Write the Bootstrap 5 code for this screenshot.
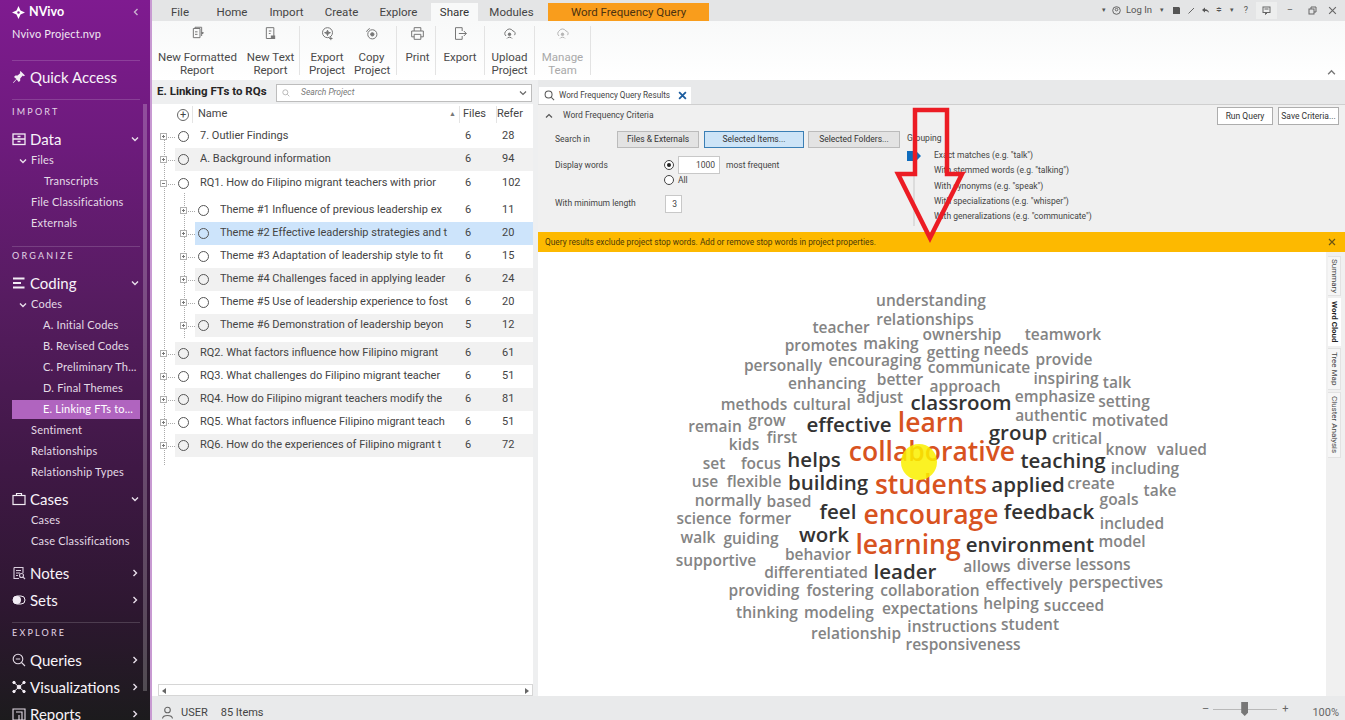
<!DOCTYPE html>
<html lang="en">
<head>
<meta charset="UTF-8">
<meta name="viewport" content="width=device-width, initial-scale=1.0">
<title>NVivo - Word Frequency Query</title>
<link href="https://cdn.jsdelivr.net/npm/bootstrap@5.3.1/dist/css/bootstrap.min.css" rel="stylesheet">
<style>
html, body { height: 720px; overflow: hidden; }
body { font-family: Roboto, "Open Sans", sans-serif; color: #3c3c3c; background: #fff; }
.app { width: 1345px; height: 720px; position: relative; }

/* sidebar */
.side { width: 150px; height: 720px; flex: none; overflow: hidden; position: relative; padding-left: 12px; padding-right: 10px; font-family: Lato, sans-serif; color: #f1e8f3;
  background: linear-gradient(180deg, #7f1b90 0%, #6d1b7c 20%, #561c60 42%, #3f1845 65%, #2d1730 85%, #1c1b1d 100%); }
.side-scroll { position: absolute; left: 143px; top: 104px; width: 4px; height: 587px; background: rgba(255,255,255,.22); }
.side-brand { height: 20px; margin-top: 2px; font-weight: 700; font-size: 12.5px; color: #fff; }
.side-brand .chev { stroke: #c9b2ce; }
.side-file { height: 20px; margin-top: 2px; margin-bottom: 16px; font-size: 11px; line-height: 20px; letter-spacing: .2px; }
.side-rule { height: 1px; background: rgba(255,255,255,.16); width: 128px; }
.side-label { height: 16px; line-height: 16px; font-size: 9px; letter-spacing: 2.2px; color: #e3d5e6; }
.side-head { height: 22px; font-size: 15px; color: #f8f3f9; }
.side-head svg.ico { width: 14px; height: 14px; margin-right: 4px; flex: none; }
.side-head .chev { margin-left: auto; margin-right: 1px; }
.side-sub { height: 21px; font-size: 11px; letter-spacing: .2px; white-space: nowrap; color: #e4dbe6; }
.lvl0 { padding-left: 7px; }
.lvl1 { padding-left: 19px; }
.lvl2 { padding-left: 31px; }
.lvl2b { padding-left: 32px; }
.side-on { background: #b064bf; color: #fff; width: 128px; height: 19px; margin-top: 1px; margin-bottom: 1px; }
.chev { width: 8px; height: 8px; fill: none; stroke: #e9dfeb; stroke-width: 1.4; flex: none; }
.m5 { margin-top: 5px; }
.m10 { margin-top: 10px; }
.m11 { margin-top: 11px; }
.m12 { margin-top: 12px; }
.m1px { margin-top: 1px; }
.m2px { margin-top: 2px; }

/* main */
.main { width: 1195px; height: 720px; border-left: 2px solid #c89ad2; background: #eaebec; }
.tabs { height: 21px; background: #e4e5e6; font-size: 11.5px; color: #444; position: relative; }
.rtab { height: 18px; line-height: 18px; margin-top: 3px; text-align: center; }
.rtab-on { background: #f8f9f9; color: #333; }
.rtab-query { background: #f99d1c; color: #4b3210; width: 161px; margin-left: 8px; }
.rt-file { width: 56px; }
.rt-home { width: 50px; margin-left: -1px; }
.rt-import { width: 59px; }
.rt-create { width: 51px; }
.rt-explore { width: 63px; }
.rt-share { width: 47px; margin-left: 1px; }
.rt-modules { width: 57px; margin-left: 5px; }
.win { font-size: 7px; color: #555; margin-left: auto; height: 21px; padding-right: 4px; }
.win svg { width: 9px; height: 9px; fill: none; stroke: #666; stroke-width: 1; }
.wc { height: 21px; display: flex; align-items: center; justify-content: center; flex: none; }
.wc12 { width: 12px; }
.wc14 { width: 14px; }
.wc16 { width: 16px; }
.wc18 { width: 18px; }
.wc22 { width: 22px; }
.wc-log { width: 34px; font-size: 9.5px; white-space: nowrap; }
.wc-help { font-size: 9px; }
.wc-fill svg { fill: #555; stroke: none; }
.win-chat { background: #edeeee; width: 21px; height: 17px; margin-left: 2px; margin-right: 2px; }
.ribbon { height: 59px; background: linear-gradient(180deg, #f8f9f9, #fff); position: relative; padding-top: 5px; }
.rb { height: 49px; text-align: center; font-size: 11.5px; line-height: 13px; color: #4a4a4a; border-right: 1px solid #e3e3e3; white-space: nowrap; flex: none; }
.rb-plain { border-right: 0; }
.rb svg { display: block; margin: 0 auto 10px; width: 15px; height: 15px; fill: none; stroke: #777; stroke-width: 1.2; }
.rb-off { color: #a9a9a9; }
.rb-off svg { stroke: #b5b5b5; }
.rb-a { width: 78px; margin-left: 6px; }
.rb-b { width: 58px; margin-left: 6px; }
.rb-c { width: 54px; }
.rb-d { width: 43px; padding-right: 7px; }
.rb-e { width: 39px; padding-left: 3px; }
.rb-f { width: 49px; }
.rb-g { width: 50px; }
.rb-h { width: 56px; }
.rb-collapse { position: absolute; right: 9px; bottom: 3px; width: 9px; height: 9px; fill: none; stroke: #777; stroke-width: 1.2; }

/* project list */
.work { height: 616px; }
.left { width: 381px; flex: none; height: 616px; position: relative; }
.left-top { height: 24px; background: #eeeff0; padding-left: 5px; }
.left-title { font-size: 11.5px; font-weight: 700; color: #262626; width: 119px; white-space: nowrap; }
.search-box { width: 256px; height: 18px; margin-top: 1px; border: 1px solid #bdbdbd; background: #fff; font-size: 8.5px; font-style: italic; color: #777; padding-left: 5px; }
.search-box svg { width: 8px; height: 8px; fill: none; stroke: #aaa; stroke-width: 1.2; margin-right: 11px; }
.search-box .chev { margin-left: auto; margin-right: 4px; stroke: #666; }
.left-body { background: #fff; height: 592px; position: relative; font-size: 11px; color: #444; }
.t-head { height: 21px; }
.t-row { height: 23px; white-space: nowrap; position: relative; }
.t-row.top { margin-left: 23px; padding-left: 3px; }
.t-row.sub { margin-left: 43px; padding-left: 3px; }
.t-shade { background: #f1f1f1; }
.t-pick { background: #cde4fb; }
.t-dot { width: 11px; height: 11px; border: 1.3px solid #555; border-radius: 50%; flex: none; margin-right: 11px; }
.t-name { width: 264px; overflow: hidden; }
.sub .t-name { width: 244px; }
.t-files { width: 38px; padding-left: 1px; }
.t-exp { position: absolute; left: -15px; top: 8px; width: 7px; height: 7px; border: 1px solid #b0b0b0; background: #fff; }
.t-exp::before { content: ""; position: absolute; left: 1px; right: 1px; top: 2px; height: 1px; background: #777; }
.t-plus::after { content: ""; position: absolute; top: 1px; bottom: 1px; left: 2px; width: 1px; background: #777; }
.t-exp-line { position: absolute; left: 7px; top: 3px; width: 7px; border-top: 1px dotted #aaa; }
.t-guide { position: absolute; border-left: 1px dotted #aaa; }
.guide-a { left: 12px; top: 36px; height: 325px; }
.guide-b { left: 32px; top: 89px; height: 145px; }
.t-gap { height: 4px; }
.t-gap-b { height: 5px; }
.hscroll { position: absolute; left: 6px; right: 0; bottom: 0; height: 12px; background: #fff; border: 1px solid #d6d6d6; }
.hscroll i { position: absolute; top: 3px; width: 0; height: 0; border-top: 3px solid transparent; border-bottom: 3px solid transparent; }
.hs-l { left: 3px; border-right: 4px solid #666; }
.hs-r { right: 3px; border-left: 4px solid #666; }
.th-sep { border-right: 1px solid #e4e4e4; height: 17px; width: 1px; flex: none; }
.th-add { width: 12px; height: 12px; margin-left: 25px; border: 1.2px solid #666; border-radius: 50%; font-size: 11px; line-height: 9px; text-align: center; color: #444; flex: none; }
.th-first { margin-left: 3px; }
.th-name { padding-left: 5px; }
.th-sort { font-size: 7px; color: #777; margin-right: 3px; }
.th-files { width: 36px; padding-left: 3px; }
.th-refer { width: 32px; padding-left: 0; margin-right: 4px; }

/* results */
.splitter { width: 5px; flex: none; background: #eeeff0; }
.right { width: 807px; flex: none; height: 616px; position: relative; background: #fff; }
.doc-tabs { height: 24px; background: #e8e9ea; padding-left: 1px; }
.doc-tab { width: 152px; height: 17px; background: #fff; margin-top: 7px; font-size: 8.2px; padding-left: 5px; color: #444; white-space: nowrap; }
.doc-tab svg { width: 11px; height: 11px; fill: none; stroke: #555; stroke-width: 1.1; margin-right: 4px; flex: none; }
.doc-tab .x { width: 9px; height: 9px; stroke: #1b5c9e; stroke-width: 1.6; margin-left: auto; margin-right: 4px; }
.crit { height: 128px; background: #f0f0f0; border-top: 1px solid #cfcfcf; font-size: 8.5px; color: #444; white-space: nowrap; position: relative; padding-left: 17px; }
.crit-title { height: 21px; margin-left: -10px; }
.crit-title svg { width: 8px; height: 8px; fill: none; stroke: #555; stroke-width: 1.2; margin-right: 10px; }
.crit-cols { margin-top: 5px; }
.crit-left { width: 352px; flex: none; }
.lbl-w { width: 62px; flex: none; }
.q-btn { height: 17px; border: 1px solid #bbb; background: #e3e3e3; font-size: 8.5px; line-height: 15px; text-align: center; color: #333; border-radius: 0; }
.q-btn-on { background: #cde4f7; border-color: #3b7fb5; }
.q-white { background: #fff; border-color: #adadad; height: 18px; line-height: 16px; }
.qb-files { width: 82px; }
.qb-items { width: 100px; margin-left: 5px; }
.qb-folders { width: 92px; margin-left: 4px; }
.qb-run { width: 56px; }
.qb-save { width: 61px; }
.row-display { margin-top: 8px; }
.lbl-display { width: 109px; flex: none; }
.row-all { margin-top: 0; padding-left: 109px; }
.all-txt { margin-left: 4px; }
.lbl-min { width: 110px; flex: none; }
.radio { width: 10px; height: 10px; border: 1px solid #444; border-radius: 50%; background: #fff; flex: none; position: relative; }
.radio-on::after { content: ""; position: absolute; left: 2px; top: 2px; width: 4px; height: 4px; border-radius: 50%; background: #222; }
.num-box { height: 18px; border: 1px solid #c8c8c8; background: #fff; text-align: right; padding-right: 4px; line-height: 16px; }
.nb-words { width: 42px; margin-left: 4px; }
.nb-min { width: 17px; }
.freq-txt { margin-left: 6px; }
.grp { position: relative; padding-left: 27px; }
.grp-line { height: 15.2px; line-height: 15.2px; }
.grp-title { margin-left: -27px; margin-bottom: 2px; }
.grp-track { position: absolute; left: 6px; top: 25px; width: 2px; height: 70px; background: #dcdcdc; }
.grp-thumb { position: absolute; left: 0; top: 20px; width: 14px; height: 10px; background: #0f6cbd; clip-path: polygon(0 0, 65% 0, 100% 50%, 65% 100%, 0 100%); }
.crit-actions { position: absolute; right: 6px; top: 2px; gap: 5px; }
.banner { height: 20px; background: #fdb900; font-size: 8.35px; color: #4c3a08; padding-left: 7px; }
.banner svg { margin-left: auto; margin-right: 9px; width: 8px; height: 8px; fill: none; stroke: #6b5512; stroke-width: 1.2; }
.cloud-wrap { height: 444px; position: relative; overflow: hidden; background: #fff; }
.rail { position: absolute; right: 0; top: 0; width: 19px; height: 444px; background: #f0f0f0; font-size: 8px; color: #444; padding-top: 4px; padding-left: 2px; }
.rail-tab { writing-mode: vertical-rl; text-align: center; background: #f6f6f6; border: 1px solid #e2e2e2; border-left: 0; width: 13px; line-height: 12px; white-space: nowrap; margin-top: 2px; }
.rail-on { background: #fff; font-weight: 700; color: #222; border-color: #fff; }
.rt-sum { height: 40px; margin-top: 0; }
.rt-cloud { height: 48px; }
.rt-tree { height: 42px; }
.rt-clu { height: 66px; }
.cw { position: absolute; transform: translate(-50%, -50%); line-height: 1; white-space: nowrap; color: #848484; font-family: "Open Sans", sans-serif; font-weight: 600; }
.cw-dark { color: #333; }
.cw-hot { color: #d8531f; }
.pointer-dot { position: absolute; left: 901px; top: 444px; width: 36px; height: 36px; border-radius: 50%; background: rgba(250,240,0,.86); }
.arrow { position: absolute; left: 892px; top: 105px; width: 76px; height: 135px; fill: none; stroke: #ec1c24; stroke-width: 4.5; overflow: visible; }

/* status */
.status { height: 24px; background: #e9eaeb; font-size: 11px; color: #444; position: relative; padding-top: 11px; }
.status > svg { width: 13px; height: 13px; fill: none; stroke: #666; stroke-width: 1.1; margin-left: 9px; margin-right: 7px; margin-top: -3px; }
.st-items { margin-left: 13px; }
.zoomer { margin-left: auto; margin-right: 6px; width: 137px; color: #666; }
.z-ctl { margin-top: -8px; }
.z-track { width: 64px; height: 1px; background: #b9b9b9; position: relative; margin-left: 4px; margin-right: 5px; }
.z-thumb { position: absolute; left: 28px; top: -7px; width: 7px; height: 14px; background: #777; clip-path: polygon(0 0, 100% 0, 100% 75%, 50% 100%, 0 75%); }
</style>
</head>
<body>
<svg width="0" height="0" class="position-absolute">
  <symbol id="ch-d" viewBox="0 0 8 8"><path d="M1 2.5 4 5.5 7 2.5"/></symbol>
  <symbol id="ch-r" viewBox="0 0 8 8"><path d="M2.5 1 5.5 4 2.5 7"/></symbol>
  <symbol id="ch-u" viewBox="0 0 8 8"><path d="M1 5.5 4 2.5 7 5.5"/></symbol>
  <symbol id="cross" viewBox="0 0 8 8"><path d="M1 1 7 7M7 1 1 7"/></symbol>
  <symbol id="lens" viewBox="0 0 12 12"><circle cx="5" cy="5" r="3.8"/><path d="M8 8 11 11"/></symbol>
</svg>

<div class="app d-flex">
  <div class="side">
    <div class="side-brand d-flex align-items-center gap-1">
      <svg width="13" height="13" viewBox="0 0 14 14" fill="#fff"><path d="M7 0 9.2 4.8 14 7 9.2 9.2 7 14 4.8 9.2 0 7 4.8 4.8Z"/><circle cx="7" cy="7" r="1.3" fill="#7f1b90"/></svg>
      NVivo
      <svg class="chev ms-auto" viewBox="0 0 8 8"><path d="M5.5 1 2.5 4 5.5 7"/></svg>
    </div>
    <div class="side-file">Nvivo Project.nvp</div>
    <div class="side-rule"></div>
    <div class="side-head d-flex align-items-center m5">
      <svg class="ico" viewBox="0 0 14 14" fill="#f3edf5"><path d="M8.5 1 13 5.5 11.6 6.2 10.8 5.6 8.2 8.4 8.2 10.8 6.8 12 4.6 9.4 1.5 13 1 12.5 4.4 9 2 6.9 3.4 5.6 5.6 5.6 8.4 3 7.8 2.2Z"/></svg>
      Quick Access
    </div>
    <div class="side-rule m11"></div>
    <div class="side-label mt-1">IMPORT</div>
    <div class="side-head d-flex align-items-center mt-2">
      <svg class="ico" viewBox="0 0 14 14" fill="none" stroke="#f3edf5" stroke-width="1.3"><rect x="1" y="2" width="12" height="10.5"/><path d="M1 7H13M5.5 4.5H8.5M5.5 9.5H8.5"/></svg>
      Data
      <svg class="chev"><use href="#ch-d"/></svg>
    </div>
    <div class="side-sub d-flex align-items-center lvl0"><svg class="chev me-1"><use href="#ch-d"/></svg>Files</div>
    <div class="side-sub d-flex align-items-center lvl2b">Transcripts</div>
    <div class="side-sub d-flex align-items-center lvl1">File Classifications</div>
    <div class="side-sub d-flex align-items-center lvl1">Externals</div>
    <div class="side-rule m12"></div>
    <div class="side-label m1px">ORGANIZE</div>
    <div class="side-head d-flex align-items-center mt-2">
      <svg class="ico" viewBox="0 0 14 14" fill="#f3edf5"><rect x="1" y="1.5" width="11.5" height="2"/><rect x="1" y="6" width="8" height="2"/><rect x="1" y="10.5" width="11.5" height="2"/></svg>
      Coding
      <svg class="chev"><use href="#ch-d"/></svg>
    </div>
    <div class="side-sub d-flex align-items-center lvl0"><svg class="chev me-1"><use href="#ch-d"/></svg>Codes</div>
    <div class="side-sub d-flex align-items-center lvl2">A. Initial Codes</div>
    <div class="side-sub d-flex align-items-center lvl2">B. Revised Codes</div>
    <div class="side-sub d-flex align-items-center lvl2">C. Preliminary Th...</div>
    <div class="side-sub d-flex align-items-center lvl2">D. Final Themes</div>
    <div class="side-sub side-on d-flex align-items-center lvl2">E. Linking FTs to...</div>
    <div class="side-sub d-flex align-items-center lvl1">Sentiment</div>
    <div class="side-sub d-flex align-items-center lvl1">Relationships</div>
    <div class="side-sub d-flex align-items-center lvl1">Relationship Types</div>
    <div class="side-head d-flex align-items-center m5">
      <svg class="ico" viewBox="0 0 14 14" fill="none" stroke="#f3edf5" stroke-width="1.2"><rect x="1" y="3.5" width="12" height="9"/><path d="M4.5 3.5V1.5H9.5V3.5"/></svg>
      Cases
      <svg class="chev"><use href="#ch-d"/></svg>
    </div>
    <div class="side-sub d-flex align-items-center lvl1">Cases</div>
    <div class="side-sub d-flex align-items-center lvl1">Case Classifications</div>
    <div class="side-head d-flex align-items-center m10">
      <svg class="ico" viewBox="0 0 14 14" fill="none" stroke="#d9cddc" stroke-width="1.1"><path d="M2 1.5H11V7M2 1.5V12.5H7M4 4.5H9M4 7H8M4 9.5H6"/><circle cx="9.5" cy="9.5" r="2"/><path d="M11 11 13 13"/></svg>
      Notes
      <svg class="chev"><use href="#ch-r"/></svg>
    </div>
    <div class="side-head d-flex align-items-center m5">
      <svg class="ico" viewBox="0 0 14 14"><rect x="1" y="3" width="12" height="8" rx="4" fill="none" stroke="#f3edf5"/><circle cx="5" cy="7" r="4" fill="#f3edf5"/></svg>
      Sets
      <svg class="chev"><use href="#ch-r"/></svg>
    </div>
    <div class="side-rule m11"></div>
    <div class="side-label m2px">EXPLORE</div>
    <div class="side-head d-flex align-items-center mt-2">
      <svg class="ico" viewBox="0 0 14 14" fill="none" stroke="#e4dbe6" stroke-width="1.1"><circle cx="6" cy="6" r="4.8"/><path d="M9.5 9.5 13 13M3.8 6H8.2"/></svg>
      Queries
      <svg class="chev"><use href="#ch-r"/></svg>
    </div>
    <div class="side-head d-flex align-items-center m5">
      <svg class="ico" viewBox="0 0 14 14" fill="#f3edf5" stroke="#f3edf5"><circle cx="7" cy="7" r="1.8"/><circle cx="2" cy="2.5" r="1.2"/><circle cx="12" cy="2.5" r="1.2"/><circle cx="2" cy="11.5" r="1.2"/><circle cx="12" cy="11.5" r="1.2"/><path d="M2 2.5 12 11.5M12 2.5 2 11.5"/></svg>
      Visualizations
      <svg class="chev"><use href="#ch-r"/></svg>
    </div>
    <div class="side-head d-flex align-items-center m5">
      <svg class="ico" viewBox="0 0 14 14" fill="none" stroke="#e4dbe6" stroke-width="1.1"><path d="M1 2H13V13H1ZM4 5H10V13M7 8V13"/></svg>
      Reports
      <svg class="chev"><use href="#ch-r"/></svg>
    </div>
    <div class="side-scroll"></div>
  </div>

  <div class="main d-flex flex-column">
    <div class="tabs d-flex">
      <div class="rtab rt-file">File</div>
      <div class="rtab rt-home">Home</div>
      <div class="rtab rt-import">Import</div>
      <div class="rtab rt-create">Create</div>
      <div class="rtab rt-explore">Explore</div>
      <div class="rtab rtab-on rt-share">Share</div>
      <div class="rtab rt-modules">Modules</div>
      <div class="rtab rtab-query">Word Frequency Query</div>
      <div class="win d-flex align-items-center">
        <span class="wc wc12">▾</span>
        <span class="wc wc12"><svg viewBox="0 0 9 9"><circle cx="4.5" cy="4.5" r="3.8"/><circle cx="4.5" cy="3.6" r="1.3"/></svg></span>
        <span class="wc wc-log">Log In</span>
        <span class="wc wc12">▾</span>
        <span class="wc wc16 wc-fill"><svg viewBox="0 0 9 9"><path d="M1 1H7L8 2V8H1Z"/></svg></span>
        <span class="wc wc14"><svg viewBox="0 0 9 9"><path d="M1.5 7.5 7 2"/></svg></span>
        <span class="wc wc14 wc-fill"><svg viewBox="0 0 9 9"><path d="M1 4 4 1.5V3.2C6.5 3.2 8 5 8 7 7 5.5 6 5 4 5V6.6Z"/></svg></span>
        <span class="wc wc14">≑</span>
        <span class="wc wc12">▾</span>
        <span class="wc wc16 wc-help">?</span>
        <span class="wc win-chat"><svg viewBox="0 0 9 9"><rect x="1" y="1" width="7" height="5.5"/><path d="M2.5 3H6.5M3.5 6.5 3.5 8.5 5.5 6.5"/></svg></span>
        <span class="wc wc22 wc-help">–</span>
        <span class="wc wc22"><svg viewBox="0 0 9 9"><rect x="1" y="3" width="5" height="5"/><path d="M3 3V1H8V6H6"/></svg></span>
        <span class="wc wc18"><svg viewBox="0 0 8 8"><use href="#cross"/></svg></span>
      </div>
    </div>
    <div class="ribbon d-flex">
      <div class="rb rb-a rb-plain">
        <svg viewBox="0 0 18 18"><path d="M4 3H12V14H4ZM6 3V1.5H14M14 1.5V12"/><path d="M6 7H9M6 10H9"/><path d="M14 8 16 8 15 9.5Z" fill="#777"/></svg>New Formatted<br>Report</div>
      <div class="rb rb-b">
        <svg viewBox="0 0 18 18"><path d="M4 2H13V15H4Z"/><path d="M7 6H10M7 9H9"/><rect x="10" y="12" width="4" height="3" fill="#777"/></svg>New Text<br>Report</div>
      <div class="rb rb-c rb-plain">
        <svg viewBox="0 0 18 18"><circle cx="9" cy="8" r="6"/><path d="M9 5 10 7.5 12.5 8 10 9 9 11.5 8 9 5.5 8 8 7.5Z" fill="#777"/><path d="M13 13V17M11 15H15"/></svg>Export<br>Project</div>
      <div class="rb rb-d">
        <svg viewBox="0 0 18 18"><circle cx="10" cy="10" r="5.5"/><circle cx="10" cy="10" r="2" fill="#777"/><path d="M3 7A7 7 0 0 1 7 3"/></svg>Copy<br>Project</div>
      <div class="rb rb-e">
        <svg viewBox="0 0 18 18"><path d="M5 6V2H13V6M5 13H2V6H16V13H13M5 10H13V16H5Z"/></svg>Print</div>
      <div class="rb rb-f">
        <svg viewBox="0 0 18 18"><path d="M11 6V2H3V16H11V12M7 9H16M13 6 16 9 13 12"/></svg>Export</div>
      <div class="rb rb-g">
        <svg viewBox="0 0 18 18"><path d="M5 12A3.5 3.5 0 0 1 5 6 4.5 4.5 0 0 1 13 6 3 3 0 0 1 15 11"/><circle cx="9" cy="10" r="1.5" fill="#777"/><path d="M6 15C6.5 13 11.5 13 12 15"/></svg>Upload<br>Project</div>
      <div class="rb rb-h rb-off">
        <svg viewBox="0 0 18 18"><path d="M5 12A3.5 3.5 0 0 1 5 6 4.5 4.5 0 0 1 13 6 3 3 0 0 1 15 11"/><circle cx="9" cy="10" r="1.5" fill="#b5b5b5"/><path d="M6 15C6.5 13 11.5 13 12 15"/></svg>Manage<br>Team</div>
      <svg class="rb-collapse"><use href="#ch-u"/></svg>
    </div>
    <div class="work d-flex">
      <div class="left">
        <div class="left-top d-flex align-items-center">
          <div class="left-title">E. Linking FTs to RQs</div>
          <div class="search-box d-flex align-items-center">
            <svg><use href="#lens"/></svg>Search Project
            <svg class="chev"><use href="#ch-d"/></svg>
          </div>
        </div>
        <div class="left-body">
          <div class="t-guide guide-a"></div>
          <div class="t-guide guide-b"></div>
          <div class="t-head d-flex align-items-center">
            <div class="th-add">+</div>
            <div class="th-sep th-first"></div>
            <div class="flex-grow-1 th-name">Name</div>
            <span class="th-sort">▲</span>
            <div class="th-sep"></div>
            <div class="th-files">Files</div>
            <div class="th-sep"></div>
            <div class="th-refer">Refer</div>
          </div>
          <div class="t-row top d-flex align-items-center"><i class="t-exp t-plus"><i class="t-exp-line"></i></i><span class="t-dot"></span><span class="t-name">7. Outlier Findings</span><span class="t-files">6</span><span>28</span></div>
          <div class="t-row top t-shade d-flex align-items-center"><i class="t-exp t-plus"><i class="t-exp-line"></i></i><span class="t-dot"></span><span class="t-name">A. Background information</span><span class="t-files">6</span><span>94</span></div>
          <div class="t-row top d-flex align-items-center m1px"><i class="t-exp"><i class="t-exp-line"></i></i><span class="t-dot"></span><span class="t-name">RQ1. How do Filipino migrant teachers with prior</span><span class="t-files">6</span><span>102</span></div>
          <div class="t-gap"></div>
          <div class="t-row sub d-flex align-items-center"><i class="t-exp t-plus"><i class="t-exp-line"></i></i><span class="t-dot"></span><span class="t-name">Theme #1 Influence of previous leadership ex</span><span class="t-files">6</span><span>11</span></div>
          <div class="t-row sub t-pick d-flex align-items-center"><i class="t-exp t-plus"><i class="t-exp-line"></i></i><span class="t-dot"></span><span class="t-name">Theme #2 Effective leadership strategies and t</span><span class="t-files">6</span><span>20</span></div>
          <div class="t-row sub d-flex align-items-center"><i class="t-exp t-plus"><i class="t-exp-line"></i></i><span class="t-dot"></span><span class="t-name">Theme #3 Adaptation of leadership style to fit</span><span class="t-files">6</span><span>15</span></div>
          <div class="t-row sub t-shade d-flex align-items-center"><i class="t-exp t-plus"><i class="t-exp-line"></i></i><span class="t-dot"></span><span class="t-name">Theme #4 Challenges faced in applying leader</span><span class="t-files">6</span><span>24</span></div>
          <div class="t-row sub d-flex align-items-center"><i class="t-exp t-plus"><i class="t-exp-line"></i></i><span class="t-dot"></span><span class="t-name">Theme #5 Use of leadership experience to fost</span><span class="t-files">6</span><span>20</span></div>
          <div class="t-row sub t-shade d-flex align-items-center"><i class="t-exp t-plus"><i class="t-exp-line"></i></i><span class="t-dot"></span><span class="t-name">Theme #6 Demonstration of leadership beyon</span><span class="t-files">5</span><span>12</span></div>
          <div class="t-gap-b"></div>
          <div class="t-row top t-shade d-flex align-items-center"><i class="t-exp t-plus"><i class="t-exp-line"></i></i><span class="t-dot"></span><span class="t-name">RQ2. What factors influence how Filipino migrant</span><span class="t-files">6</span><span>61</span></div>
          <div class="t-row top d-flex align-items-center"><i class="t-exp t-plus"><i class="t-exp-line"></i></i><span class="t-dot"></span><span class="t-name">RQ3. What challenges do Filipino migrant teacher</span><span class="t-files">6</span><span>51</span></div>
          <div class="t-row top t-shade d-flex align-items-center"><i class="t-exp t-plus"><i class="t-exp-line"></i></i><span class="t-dot"></span><span class="t-name">RQ4. How do Filipino migrant teachers modify the</span><span class="t-files">6</span><span>81</span></div>
          <div class="t-row top d-flex align-items-center"><i class="t-exp t-plus"><i class="t-exp-line"></i></i><span class="t-dot"></span><span class="t-name">RQ5. What factors influence Filipino migrant teach</span><span class="t-files">6</span><span>51</span></div>
          <div class="t-row top t-shade d-flex align-items-center"><i class="t-exp t-plus"><i class="t-exp-line"></i></i><span class="t-dot"></span><span class="t-name">RQ6. How do the experiences of Filipino migrant t</span><span class="t-files">6</span><span>72</span></div>
          <div class="hscroll"><i class="hs-l"></i><i class="hs-r"></i></div>
        </div>
      </div>
      <div class="splitter"></div>
      <div class="right">
        <div class="doc-tabs d-flex">
          <div class="doc-tab d-flex align-items-center">
            <svg><use href="#lens"/></svg>Word Frequency Query Results
            <svg class="x"><use href="#cross"/></svg>
          </div>
        </div>
        <div class="crit">
          <div class="crit-title d-flex align-items-center"><svg><use href="#ch-u"/></svg>Word Frequency Criteria</div>
          <div class="crit-cols d-flex">
            <div class="crit-left">
              <div class="d-flex align-items-center">
                <div class="lbl-w">Search in</div>
                <div class="q-btn qb-files">Files &amp; Externals</div>
                <div class="q-btn q-btn-on qb-items">Selected Items...</div>
                <div class="q-btn qb-folders">Selected Folders...</div>
              </div>
              <div class="d-flex align-items-center row-display">
                <div class="lbl-display">Display words</div>
                <span class="radio radio-on"></span>
                <div class="num-box nb-words">1000</div>
                <div class="freq-txt">most frequent</div>
              </div>
              <div class="d-flex align-items-center row-all">
                <span class="radio"></span><span class="all-txt">All</span>
              </div>
              <div class="d-flex align-items-center mt-2">
                <div class="lbl-min">With minimum length</div>
                <div class="num-box nb-min">3</div>
              </div>
            </div>
            <div class="grp">
              <div class="grp-line grp-title">Grouping</div>
              <div class="grp-line">Exact matches (e.g. "talk")</div>
              <div class="grp-line">With stemmed words (e.g. "talking")</div>
              <div class="grp-line">With synonyms (e.g. "speak")</div>
              <div class="grp-line">With specializations (e.g. "whisper")</div>
              <div class="grp-line">With generalizations (e.g. "communicate")</div>
              <div class="grp-track"></div>
              <div class="grp-thumb"></div>
            </div>
          </div>
          <div class="crit-actions d-flex">
            <div class="q-btn q-white qb-run">Run Query</div>
            <div class="q-btn q-white qb-save">Save Criteria...</div>
          </div>
        </div>
        <div class="banner d-flex align-items-center">Query results exclude project stop words. Add or remove stop words in project properties.<svg><use href="#cross"/></svg></div>
        <div class="cloud-wrap" id="cloud">
          <div class="rail d-flex flex-column">
            <div class="rail-tab rt-sum">Summary</div>
            <div class="rail-tab rail-on rt-cloud">Word Cloud</div>
            <div class="rail-tab rt-tree">Tree Map</div>
            <div class="rail-tab rt-clu">Cluster Analysis</div>
          </div>
        </div>
      </div>
    </div>
    <div class="status d-flex align-items-center">
      <svg viewBox="0 0 13 13"><circle cx="6.5" cy="4" r="2.8"/><path d="M1.5 12.5C2 8.5 11 8.5 11.5 12.5"/></svg>
      <span>USER</span><span class="st-items">85 Items</span>
      <div class="zoomer d-flex align-items-center">
        <span class="z-ctl">–</span><div class="z-track z-ctl"><div class="z-thumb"></div></div><span class="z-ctl">+</span>
        <span class="ms-auto">100%</span>
      </div>
    </div>
  </div>

  <div class="pointer-dot"></div>
  <svg class="arrow" viewBox="0 0 76 135"><path d="M23 5H55V69H70L38 133 6 69H23Z"/></svg>
</div>

<script>
// word cloud: text, centre x, centre y (page coordinates), tier
const sizes = { s: 15.5, d: 20.5, h: 26.5 };
const words = [
  ['understanding',931,301],['relationships',925,320],['teacher',841,328],['ownership',962,335],['teamwork',1063,335],
  ['promotes',821,346],['making',891,344],['getting',953,353],['needs',1006,350],['personally',783,366],
  ['encouraging',875,361],['communicate',979,368],['provide',1064,360],['enhancing',827,384],['better',900,380],
  ['approach',965,387],['inspiring',1066,379],['talk',1117,383],['methods',754,405],['cultural',822,405],
  ['adjust',880,398],['classroom',961,402,'d'],['emphasize',1055,397],['setting',1124,402],['effective',849,424,'d'],
  ['learn',931,422,'h'],['authentic',1051,416],['motivated',1130,421],['remain',715,427],['grow',767,421],
  ['group',1018,432,'d'],['critical',1077,439],['kids',744,445],['first',782,438],['collaborative',932,451,'h'],
  ['know',1126,450],['valued',1182,450],['set',714,464],['focus',761,464],['helps',814,459,'d'],
  ['teaching',1063,460,'d'],['including',1145,469],['use',705,482],['flexible',754,482],['building',828,482,'d'],
  ['students',931,484,'h'],['applied',1028,484,'d'],['create',1091,484],['take',1160,491],['normally',728,501],
  ['based',789,502],['goals',1119,500],['feel',838,511,'d'],['encourage',931,514,'h'],['feedback',1049,511,'d'],
  ['science',704,519],['former',765,519],['included',1132,524],['walk',698,538],['guiding',751,539],
  ['work',824,534,'d'],['learning',908,544,'h'],['environment',1030,544,'d'],['model',1122,542],['supportive',716,561],
  ['behavior',818,555],['allows',987,567],['diverse',1044,565],['lessons',1103,565],['differentiated',816,573],
  ['leader',905,571,'d'],['providing',764,591],['fostering',840,591],['collaboration',930,591],['effectively',1024,585],
  ['perspectives',1116,583],['thinking',767,613],['modeling',839,613],['expectations',930,609],['helping',1011,604],
  ['succeed',1074,606],['relationship',856,634],['instructions',952,627],['student',1030,625],['responsiveness',963,645]
];
const cloud = document.getElementById('cloud');
words.forEach(function (w) {
  const tier = w[3] || 's';
  const el = document.createElement('span');
  el.className = 'cw' + (tier === 'd' ? ' cw-dark' : tier === 'h' ? ' cw-hot' : '');
  el.textContent = w[0];
  el.style.left = (w[1] - 538) + 'px';
  el.style.top = (w[2] - 252) + 'px';
  el.style.fontSize = sizes[tier] + 'px';
  cloud.appendChild(el);
});
</script>
<script src="https://cdn.jsdelivr.net/npm/bootstrap@5.3.1/dist/js/bootstrap.bundle.min.js"></script>
</body>
</html>
